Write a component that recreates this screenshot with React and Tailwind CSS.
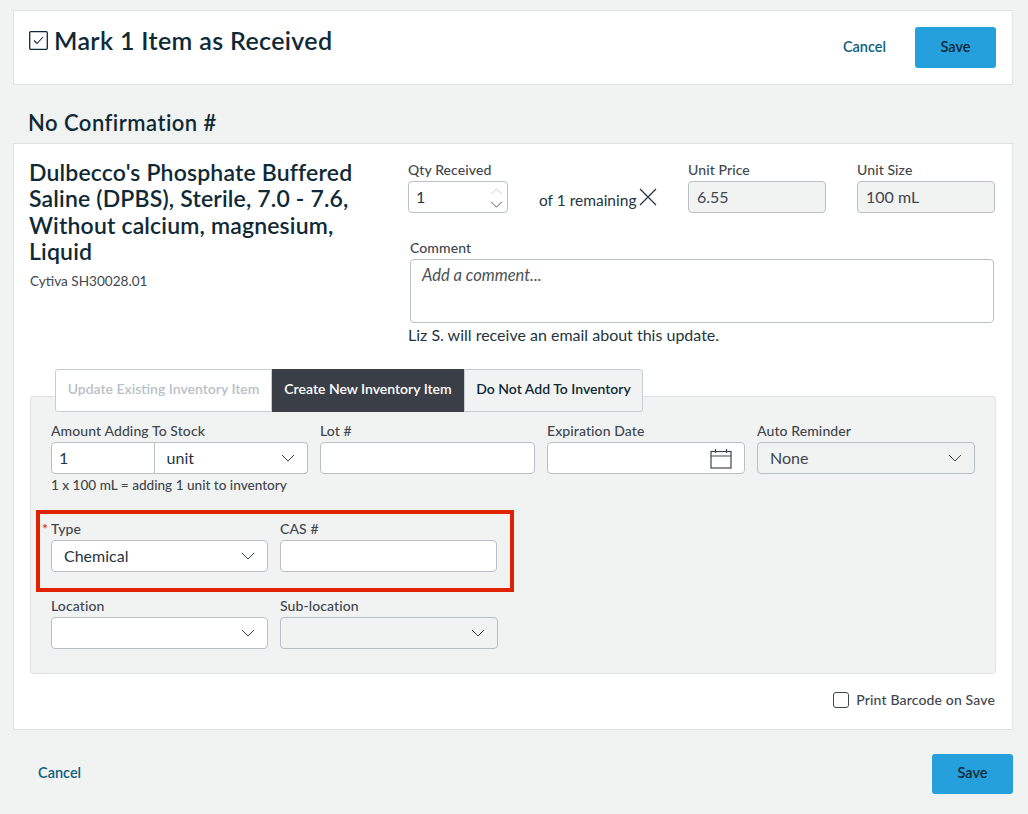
import React from "react";

const Chevron = ({ className = "", w = 14, h = 8 }) => (
  <svg width={w} height={h} viewBox="0 0 14 8" fill="none" stroke="#3c4449" strokeWidth="1" className={className}>
    <path d="M1 1l6 6 6-6" />
  </svg>
);

const Label = ({ children, className = "" }) => (
  <div className={`text-[14px] leading-[17px] text-[#3f464d] font-medium tracking-[0.1px] ${className}`}>{children}</div>
);

const Select = ({ value, className = "", disabled }) => (
  <div className={`h-[32px] border border-[#b8bfc6] rounded-[4px] flex items-center justify-between pl-[12px] pr-[12px] text-[16px] ${disabled ? "bg-[#f1f3f3] text-[#3f464d]" : "bg-white text-[#1f3540]"} ${className}`}>
    <span>{value}</span>
    <Chevron />
  </div>
);

const Input = ({ className = "" }) => (
  <div className={`h-[32px] border border-[#b8bfc6] rounded-[4px] bg-white ${className}`} />
);

export default function App() {
  return (
    <div className="w-[1028px] h-[814px] bg-[#f1f3f3] pt-[10px] pl-[13px] pr-[15px] text-[#1f3540] font-['Lato','Liberation_Sans',sans-serif] overflow-hidden">
      {/* Header */}
      <div className="h-[75px] bg-white border border-[#dfe2e5] flex justify-between pl-[15px] pr-[16px]">
        <div className="flex items-center h-[60px] gap-[6px]">
          <svg width="19" height="19" viewBox="0 0 19 19" fill="none" stroke="#0f2a36" className="mt-[-2px]">
            <rect x="0.7" y="0.7" width="17.6" height="17.6" rx="1" strokeWidth="1.3" />
            <path d="M5 9.5l3 3 6-6.5" strokeWidth="1.1" />
          </svg>
          <h1 className="text-[25px] font-semibold leading-[30px] text-[#0f2a36] tracking-[0.35px] mt-[-2px]">Mark 1 Item as Received</h1>
        </div>
        <div className="flex items-start pt-[16px]">
          <button className="text-[14.5px] font-semibold text-[#0e5e7e] mt-[11px] mr-[29px] leading-[17px]">Cancel</button>
          <button className="w-[81px] h-[41px] rounded-[3px] bg-[#269fdd] text-[14.5px] font-semibold text-[#0f2a36] pb-[1px]">Save</button>
        </div>
      </div>

      <h2 className="text-[22px] font-semibold leading-[26px] text-[#0f2a36] ml-[15px] mt-[25px] tracking-[0.47px]">No Confirmation #</h2>

      {/* Main card */}
      <div className="mt-[7px] h-[587px] bg-white border border-[#dfe2e5] pl-[16px] pr-[16px] pt-[17px]">
        <div className="flex h-[208px]">
          <div className="w-[378px]">
            <div className="text-[23px] font-semibold leading-[26.4px] w-[345px] ml-[-1px] mt-[-2px] tracking-[0.17px] text-[#0f2a36]">
              Dulbecco's Phosphate Buffered Saline (DPBS), Sterile, 7.0 - 7.6, Without calcium, magnesium, Liquid
            </div>
            <div className="text-[13.6px] leading-[17px] mt-[8px] text-[#3f464d]">Cytiva SH30028.01</div>
          </div>
          <div className="w-[587px]">
            <div className="flex">
              <div className="w-[100px]">
                <Label className="mb-[3px]">Qty Received</Label>
                <div className="h-[32px] border border-[#b8bfc6] rounded-[4px] bg-white flex items-center justify-between pl-[7px] pr-[4px] text-[16px]">
                  <span>1</span>
                  <span className="flex flex-col gap-[6px] pt-[2px]">
                    <Chevron w={13} h={7} className="rotate-180 opacity-30" />
                    <Chevron w={13} h={7} />
                  </span>
                </div>
              </div>
              <div className="ml-[31px] mt-[23px] w-[149px] flex items-center text-[15.5px] leading-[20px] h-[32px] text-[#1f3540] whitespace-nowrap">
                of 1 remaining
                <svg width="18" height="18" viewBox="0 0 18 18" fill="none" stroke="#1f3540" strokeWidth="1.2" className="ml-[3px] mt-[-7px]">
                  <path d="M1 1l16 16M17 1L1 17" />
                </svg>
              </div>
              <div className="w-[138px]">
                <Label className="mb-[3px]">Unit Price</Label>
                <div className="h-[32px] border border-[#b8bfc6] rounded-[4px] bg-[#f1f3f3] flex items-center pl-[8px] pb-[1px] text-[16px] text-[#3f464d]">6.55</div>
              </div>
              <div className="ml-[31px] w-[138px]">
                <Label className="mb-[3px]">Unit Size</Label>
                <div className="h-[32px] border border-[#b8bfc6] rounded-[4px] bg-[#f1f3f3] flex items-center pl-[8px] pb-[1px] text-[16px] text-[#3f464d]">100 mL</div>
              </div>
            </div>
            <Label className="ml-[2px] mt-[23px] mb-[3px]">Comment</Label>
            <div className="ml-[2px] w-[584px] h-[64px] border border-[#b8bfc6] rounded-[4px] bg-white pl-[11px] pt-[5px] text-[16.5px] leading-[20px] italic text-[#4a5257]">Add a comment...</div>
            <div className="text-[16px] leading-[20px] mt-[2px] text-[#1f3540]">Liz S. will receive an email about this update.</div>
          </div>
        </div>

        {/* Tabs */}
        <div className="relative z-10 ml-[25px] flex h-[43px] w-[588px] text-[14px] font-semibold">
          <div className="w-[217px] border border-[#c7ccd1] rounded-l-[3px] bg-white text-[#b8bfc6] flex items-center justify-center pb-[4px]">Update Existing Inventory Item</div>
          <div className="w-[192px] bg-[#3a3f47] text-white flex items-center justify-center pb-[4px]">Create New Inventory Item</div>
          <div className="w-[179px] border border-[#c7ccd1] rounded-r-[3px] bg-[#f1f3f3] text-[#0f2a36] flex items-center justify-center pb-[4px]">Do Not Add To Inventory</div>
        </div>

        {/* Panel */}
        <div className="mt-[-16px] h-[278px] w-[966px] bg-[#f1f3f3] border border-[#dfe2e5] rounded-[3px] pl-[20px] pt-[25px]">
          <div className="flex">
            <div className="w-[257px]">
              <Label className="mb-[3px]">Amount Adding To Stock</Label>
              <div className="flex">
                <div className="h-[32px] w-[104px] border border-[#b8bfc6] rounded-l-[4px] bg-white flex items-center pl-[7px] text-[16px]">1</div>
                <Select value="unit" className="w-[154px] rounded-l-none border-l-0" />
              </div>
            </div>
            <div className="ml-[12px] w-[215px]">
              <Label className="mb-[3px]">Lot #</Label>
              <Input />
            </div>
            <div className="ml-[12px] w-[198px]">
              <Label className="mb-[3px]">Expiration Date</Label>
              <div className="h-[32px] border border-[#b8bfc6] rounded-[4px] bg-white flex items-center justify-end pr-[12px]">
                <svg width="22" height="21" viewBox="0 0 22 21" fill="none" stroke="#3f464d" strokeWidth="1.2">
                  <rect x="1" y="3.5" width="20" height="16.5" />
                  <path d="M1 8h20M5.5 1v4M16.5 1v4" />
                </svg>
              </div>
            </div>
            <div className="ml-[12px] w-[218px]">
              <Label className="mb-[3px]">Auto Reminder</Label>
              <Select value="None" disabled />
            </div>
          </div>
          <div className="text-[13.6px] leading-[17px] mt-[3px] text-[#3f464d] font-medium">1 x 100 mL = adding 1 unit to inventory</div>

          {/* Highlighted row */}
          <div className="relative ml-[-15px] mt-[16px] w-[478px] h-[82px] border-[4px] border-[#e02200] pl-[11px] pt-[6px] flex">
            <div className="w-[217px]">
              <Label className="mb-[3px] relative">
                <span className="absolute left-[-9px] top-[0px] text-[#c8201c]">*</span>Type
              </Label>
              <Select value="Chemical" />
            </div>
            <div className="ml-[12px] w-[217px]">
              <Label className="mb-[3px]">CAS #</Label>
              <Input />
            </div>
          </div>

          <div className="flex mt-[5px]">
            <div className="w-[217px]">
              <Label className="mb-[3px]">Location</Label>
              <Select value="" />
            </div>
            <div className="ml-[12px] w-[218px]">
              <Label className="mb-[3px]">Sub-location</Label>
              <Select value="" disabled />
            </div>
          </div>
        </div>

        <div className="flex justify-end items-center gap-[7px] mt-[17px] w-[965px]">
          <span className="w-[16px] h-[16px] border border-[#3f464d] rounded-[3px] bg-white" />
          <span className="text-[14px] leading-[17px] font-medium tracking-[0.15px] text-[#3f464d]">Print Barcode on Save</span>
        </div>
      </div>

      {/* Footer */}
      <div className="flex justify-between items-center mt-[24px] h-[40px] pl-[25px]">
        <button className="text-[14.5px] font-semibold text-[#0e5e7e] pb-[2px]">Cancel</button>
        <button className="w-[81px] h-[40px] rounded-[3px] bg-[#269fdd] text-[14.5px] font-semibold text-[#0f2a36] pb-[2px]">Save</button>
      </div>
    </div>
  );
}
